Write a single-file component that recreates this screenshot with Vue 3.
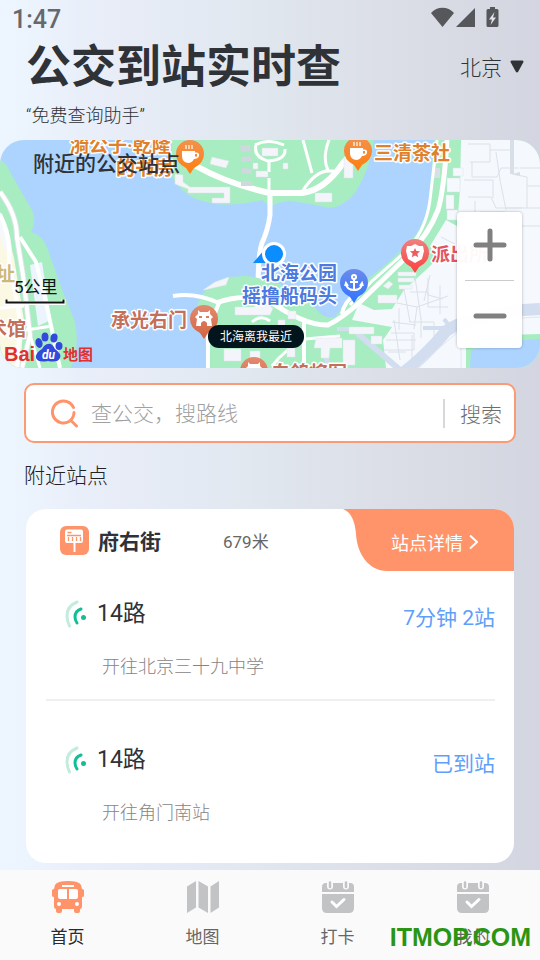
<template>
  <div class="page">
    <div class="status-bar">
      <span class="time">1:47</span>
      <svg class="status-icons" viewBox="0 0 68 22" aria-hidden="true">
        <path d="M0 6C6-1 17-1 23 6L11.500 20z" />
        <path d="M25 20L44 1V20z" />
        <path d="M59 0h5v2h2q1.500 0 1.500 1.500v15q0 1.500-1.500 1.500h-9q-1.500 0-1.500-1.500v-15q0-1.500 1.500-1.500h2z" />
        <path class="bolt" d="M63.500 5l-5.500 7.500h3l-1.500 5.500 5.500-7.500h-3z" />
      </svg>
    </div>

    <header class="header">
      <div>
        <h1 class="title">公交到站实时查</h1>
        <p class="subtitle">“免费查询助手”</p>
      </div>
      <div class="city">
        <select v-model="city" aria-label="城市">
          <option>北京</option>
        </select>
        <svg viewBox="0 0 14 13" aria-hidden="true">
          <path d="M1.500 0.500h11q1.500 0.500 0.700 2L8.300 11.500q-1.300 1.800-2.600 0L0.800 2.500Q0 1 1.500 0.500z" />
        </svg>
      </div>
    </header>

    <section class="map">
      <svg class="map-canvas" viewBox="0 140 540 228" preserveAspectRatio="xMidYMid slice">
        <defs>
          <linearGradient v-for="p in pinColors" :id="p.id" :key="p.id" x1="0" y1="0" x2="0" y2="1">
            <stop offset="0" :stop-color="p.from" />
            <stop offset="1" :stop-color="p.to" />
          </linearGradient>
        </defs>
        <rect y="140" width="540" height="228" fill="#acd4ff" />

        <!-- west bank -->
        <path fill="#a7edc1" d="M0 160Q7 163 10 172L33 212Q36 222 31 232Q42 234 48 250L60 284L75 322Q80 345 71 368H0z" />
        <path fill="#fbf8e4" d="M0 222Q8 232 14 258L24 320L20 368H0z" />
        <path fill="#ecf4fd" d="M30 265l12-3 9 58-13 6z" />
        <path fill="#f5f8fd" d="M0 212Q10 226 12 250L4 250 0 234z" />
        <g fill="none" stroke="#d9e5e4" stroke-width="6">
          <path d="M0 192Q17 214 17 238L23 275L30 335L22 368" />
        </g>
        <g fill="none" stroke="#fff" stroke-width="4">
          <path d="M0 192Q17 214 17 238L23 275L30 335L22 368" />
          <path d="M0 214Q10 235 9 260L20 320L17 368" />
          <path d="M20 237L36 262L46 302L54 340L60 368" />
          <path d="M26 330L52 326M0 308L24 306M30 335L40 368" stroke-width="3" />
        </g>

        <!-- north island -->
        <path fill="#a7edc1" d="M172 140H374Q370 170 355 193Q343 207 330 208Q312 204 290 201Q277 202 270 207L262 200Q240 206 215 204Q182 199 172 176z" />
        <g fill="none" stroke="#fff">
          <path stroke-width="6" d="M196 166Q228 184 270 193H302Q325 190 343 163L352 153" />
          <path stroke-width="3" d="M303 140L312 173M329 140Q322 158 328 170M302 192Q318 166 336 172M269 162v10M269 178v15" />
          <path stroke-width="3" d="M256 145Q253 157 268 161Q286 160 285 149M255 145Q268 138 284 145" />
        </g>
        <g fill="#f3f5fb" stroke="#dce3e8" stroke-width=".5">
          <path d="M175 174l8 1v7l7 5h40v16h-18v-5h12v-5h-36v-4l-13-5z" />
          <path d="M212 157l17 4-3 7-16-4z" />
          <path d="M253 163h5v6h-5zM256 171h12v6h-12zM262 148h16v8h-16zM344 158l9 4v16h-9zM315 193h17v9h-17zM283 163h5v6h-5z" />
        </g>
        <path fill="#cfd8dd" d="M240 146l10-1 1 6-10 1zM241 157l10-1 1 5-10 1zM242 168l10 1v5h-10zM241 181h11v5h-11z" />

        <!-- causeway between the islands -->
        <path fill="none" stroke="#fff" stroke-width="5" d="M270 193V215Q268 230 262 243Q258 254 258 290" />

        <!-- south island and east bank -->
        <path fill="#a7edc1" d="M208 368L206 331L195 314Q200 287 224 279Q247 272 270 282Q302 289 312 303Q321 320 335 317Q348 300 362 283Q390 263 411 240Q429 222 431 180L434 140H540V368z" />
        <path fill="#f5f8fd" d="M461 140H540V368H386L383 340L392 327L352 320L359 303L374 310L392 309L404 290L428 268L437 259L430 246L446 220L457 226L460 190z" />
        <path fill="#f5f8fd" stroke="#dce1e9" stroke-width=".5" d="M453 168h10v8h-10zM447 178h13v14h-13zM446 195h8v14h-8zM447 210h11v10h-11z" />

        <!-- buildings of the east bank -->
        <g fill="none" stroke="#dce1e9" stroke-width="1">
          <path d="M468 144h22v18h-20M490 150h22v22M472 162v15h25l4-9h18M464 180h29v18M468 197h23l5 11h26M480 212h25v14h35M506 208h34" />
          <path d="M496 152l4 28M500 180l6 30M512 174l15 3v31M527 186h13M540 168h-20M475 201v20" />
          <path d="M441 237l14 7M432 250l14 8M410 292h18v15h20M397 303l20 4-3 22M428 278v17l15 4M430 275l-6 26M417 307l31-11" />
          <path d="M391 333h23v17h-30M409 322h25v15M421 318v20M440 285v29M399 308v22M412 335v26" />
          <path d="M386 340h30M388 352h18M392 322l24 3M404 289l6 33M415 277l6 42M394 320l6 40" />
        </g>
        <path fill="#d9dfe6" d="M510 140h4v34h-4zM512 174l8-2v4z" />
        <path fill="#d9dfe6" d="M434 168h6v10h-6z" />
        <g fill="none" stroke="#d2ddef" stroke-width="12">
          <path d="M398 377Q426 356 446 331Q475 312 540 309" />
          <path d="M357 333L400 370" stroke-width="6" />
          <path d="M337 329h15M423 328h28l-7-9" stroke-width="4" />
          <path d="M325 350l4 22" stroke-width="5" />
        </g>
        <g fill="none" stroke="#e0e7f0" stroke-width="1">
          <path d="M417 368Q440 347 458 332Q482 319 540 317M467 368V340M461 368V340" />
        </g>
        <path fill="#a7edc1" d="M466 343Q490 335 540 334V368H466z" />
        <path fill="#acd4ff" d="M471 350Q500 341 540 339V368H470z" />

        <!-- southern and eastern roads -->
        <g fill="none" stroke="#fff" stroke-width="5">
          <path d="M173 296Q195 292 219 303L208 330V368" stroke-width="4" />
          <path d="M216 303Q235 295 265 298Q304 326 328 325Q341 319 360 302L397 266Q427 239 438 210Q444 190 447 140" />
          <path d="M350 305L372 281L404 253Q426 232 430 200L437 140" stroke-width="3" />
          <path d="M342 314Q344 302 356 293M304 319V368" stroke-width="4" />
          <path d="M272 366Q284 350 305 339L340 336M252 322Q261 314 270 321" stroke-width="3" />
        </g>
        <g fill="#f3f5fb" stroke="#dde7e8" stroke-width=".5">
          <path d="M203 290l12-8 14-5-3 8-22 5zM235 307h19l5-5 14 6-3 7h-35z" />
          <path d="M316 338h26v10h-12l-1 10h-8v-10h-7zM378 295h19v8h-19zM398 272h18v4h-18zM398 278h16v4h-16zM399 285h13v4h-13zM389 281l4 3-5 5-5-3zM349 327h25v7h-25zM343 340h12v25h-12zM371 336h11v8h-11zM287 348h8v9h-8zM278 320h7v8h-7zM288 311h8v8h-8z" />
          <path d="M224 349h17v12h-17zM250 351h10v10h-10z" />
        </g>

        <!-- current position -->
        <path fill="#0a8dff" d="M253 263l12-14 8 14z" />
        <circle cx="274" cy="254" r="10.500" fill="#0a8dff" stroke="#fff" stroke-width="3" />

        <g class="poi">
          <text v-for="l in labels" :key="l.text" :x="l.x" :y="l.y" :fill="l.color">{{ l.text }}</text>
        </g>

        <g v-for="p in pins" :key="p.x" :transform="`translate(${p.x} ${p.y})`">
          <path :fill="`url(#${p.fill})`" d="M-14 0a14 14 0 1 1 28 0Q14 9 4 14L0 20L-4 14Q-14 9-14 0z" />
          <g v-if="p.type === 'tea'" fill="#fff">
            <path d="M-8-3H5V-1.500Q10-2 9 2Q8 5 4 5Q2 9-2 9Q-8 8-8 2z" />
            <path d="M-4-9v4M-1-9v4M2-9v4" stroke="#fff" stroke-width="1.200" />
            <path d="M5 0h2v2.500H5z" :fill="`url(#${p.fill})`" />
          </g>
          <g v-else-if="p.type === 'police'">
            <path fill="#fff" d="M0-9l4 2 4 0 1 5-2 8-7 4-7-4-2-8 1-5h4z" />
            <path fill="#ee5962" d="M0-5l1.400 3 3.600.3-2.700 2.400 1 3.600L0 2.500l-3.300 1.800 1-3.600L-5-1.700l3.600-.3z" />
          </g>
          <g v-else-if="p.type === 'anchor'" fill="none" stroke="#fff" stroke-width="2">
            <circle cy="-6" r="2" />
            <path d="M0-4V7M-4-1H4M-8 1Q-7 7 0 7Q7 7 8 1M-9 3l1-3 2 3M9 3L8 0 6 3" />
          </g>
          <path v-else fill="#fff" fill-rule="evenodd" d="M-6-9l2 2h8l2-2v4l3 3-2 2 1 7H3V4Q0 0-3 4v3h-5l1-7-2-2 3-3zM-5-1h3v-2h-3zM2-1h3v-2H2z" />
        </g>

        <g class="callout">
          <rect x="208" y="325" width="96" height="23" rx="11" />
          <text x="220" y="341">北海离我最近</text>
        </g>

        <text class="scale-text" x="14" y="293">5公里</text>
        <path d="M6.500 299v4h57v-4" fill="none" stroke="#fff" stroke-width="4" />
        <path d="M6.500 299.500v3h57v-3" fill="none" stroke="#111" stroke-width="2" />

        <g class="baidu">
          <text x="4" y="361" class="bai">Bai</text>
          <g fill="#3349db">
            <ellipse cx="39" cy="343" rx="3.500" ry="5" transform="rotate(-15 39 343)" />
            <ellipse cx="45" cy="337" rx="3.500" ry="4.500" />
            <ellipse cx="54" cy="338" rx="3.500" ry="4.500" transform="rotate(12 54 338)" />
            <ellipse cx="59" cy="346" rx="3.500" ry="4" />
            <path d="M48 344Q52 343 55 349Q62 354 60 358Q58 363 48 361Q38 363 36 358Q35 353 42 349Q45 344 48 344z" />
          </g>
          <text x="42" y="359" class="du">du</text>
          <text x="63" y="360" class="ditu">地图</text>
        </g>
      </svg>

      <h2 class="map-title">附近的公交站点</h2>

      <div class="zoom">
        <button type="button" aria-label="放大">
          <svg viewBox="0 0 34 34"><path d="M3 17h28M17 3v28" /></svg>
        </button>
        <button type="button" aria-label="缩小">
          <svg viewBox="0 0 34 34"><path d="M3 17h28" /></svg>
        </button>
      </div>
    </section>

    <form class="search" @submit.prevent>
      <svg viewBox="0 0 28 30" aria-hidden="true">
        <path d="M22.500 9.500A11 11 0 1 0 18 23.500Q23 20 23 14.500M20.500 23l5 5" />
      </svg>
      <input v-model="keyword" type="text" placeholder="查公交，搜路线" aria-label="查公交，搜路线" />
      <button type="submit">搜索</button>
    </form>

    <h2 class="section-title">附近站点</h2>

    <section class="card">
      <div class="card-head">
        <svg class="stop-icon" viewBox="0 0 29 29" aria-hidden="true">
          <rect width="29" height="29" rx="6" fill="#ff946a" />
          <path d="M7 3.500h14q2 0 2 2V15q0 2-2 2h-5.500v9h-2v-9H7q-2 0-2-2V5.500q0-2 2-2z" fill="#fff" />
          <path d="M7.500 6.500h4M7 9.500h14M8.500 11v4M12.500 11v4M16.500 11v4M20.500 11v4" stroke="#ff946a" stroke-width="1.300" />
        </svg>
        <h3 class="stop-name">府右街</h3>
        <span class="distance">679米</span>
        <a class="detail" href="#">
          <svg class="detail-bg" viewBox="0 0 171 62" preserveAspectRatio="none" aria-hidden="true">
            <path d="M0 0C8 3 12 12 13 25C14 45 26 62 44 62H171V0z" />
          </svg>
          <span>站点详情</span>
          <svg class="chevron" viewBox="0 0 9 16" aria-hidden="true"><path d="M1 1.500l7 6.500-7 6.500" /></svg>
        </a>
      </div>

      <ul class="routes">
        <li v-for="r in routes" :key="r.to" class="route">
          <div class="route-line">
            <svg class="signal" viewBox="0 0 22 28" aria-hidden="true">
              <path d="M12 2Q2 6 2 16Q2 21 4.500 26" stroke="#c3ecdf" />
              <path d="M16 9Q10 11 10 17Q10 20 12 23" stroke="#10bf97" />
              <circle cx="18.500" cy="17.500" r="2.500" fill="#10bf97" />
            </svg>
            <span class="route-name">{{ r.name }}</span>
            <span class="eta">{{ r.eta }}</span>
          </div>
          <p class="dest">{{ r.to }}</p>
        </li>
      </ul>
    </section>

    <nav class="tabs">
      <a v-for="t in tabs" :key="t.label" href="#" :class="{ active: t.icon === 'bus' }">
        <svg viewBox="0 0 32 32" aria-hidden="true">
          <template v-if="t.icon === 'bus'">
            <path d="M3 4Q5 0 16 0Q27 0 29 4L30 8q2 0 2 1.500v5q0 1.500-2 1.500V25q0 3-2 3v2q0 2-2 2h-2q-2 0-2-2v-2H10v2q0 2-2 2H6q-2 0-2-2v-2q-2 0-2-3V16q-2 0-2-1.500v-5Q0 8 2 8z" />
            <path d="M10 4h12v2H10zM8 8h7v10H8q-2 0-2-2v-6q0-2 2-2zM17 8h7q2 0 2 2v6q0 2-2 2h-7z" fill="#fff" />
            <circle cx="7" cy="23" r="2" fill="#fff" />
            <circle cx="25" cy="23" r="2" fill="#fff" />
          </template>
          <path v-else-if="t.icon === 'map'" d="M0 5.500L9 0V26.500L0 32zM11.500 0L21 5.500V32L11.500 26.500zM23.500 5.500L32 0V26.500L23.500 32z" />
          <template v-else>
            <path d="M4 2h24q4 0 4 4v5H0V6q0-4 4-4zM0 13h32v14q0 5-5 5H5q-5 0-5-5z" />
            <path d="M8 1v4.500M24 1v4.500" stroke="#fafafa" stroke-width="6" stroke-linecap="round" />
            <path d="M8 1.500v4.500M24 1.500v4.500" stroke="#c1c3c5" stroke-width="2.500" stroke-linecap="round" />
            <path d="M10 21l4.500 4.500L22 18.500" fill="none" stroke="#fff" stroke-width="3" stroke-linecap="round" />
          </template>
        </svg>
        <span>{{ t.label }}</span>
      </a>
      <span class="watermark">ITMOP.COM</span>
    </nav>
  </div>
</template>

<script setup>
import { ref } from 'vue'

const city = ref('北京')
const keyword = ref('')

const pinColors = [
  { id: 'pin-orange', from: '#f2914e', to: '#ff7f0e' },
  { id: 'pin-red', from: '#f18080', to: '#fb4141' },
  { id: 'pin-blue', from: '#6c8cea', to: '#2e73ff' },
  { id: 'pin-brown', from: '#e38b70', to: '#d3633f' }
]

const pins = [
  { x: 190, y: 154, fill: 'pin-orange', type: 'tea' },
  { x: 358, y: 151, fill: 'pin-orange', type: 'tea' },
  { x: 415, y: 253, fill: 'pin-red', type: 'police' },
  { x: 354, y: 283, fill: 'pin-blue', type: 'anchor' },
  { x: 204, y: 319, fill: 'pin-brown', type: 'gate' },
  { x: 254, y: 371, fill: 'pin-brown', type: 'gate' }
]

const labels = [
  { text: '漪公子·乾隆', x: 70, y: 152, color: '#e0802b' },
  { text: '的书房', x: 116, y: 175, color: '#e0802b' },
  { text: '三清茶社', x: 374, y: 160, color: '#e0802b' },
  { text: '派出所', x: 431, y: 261, color: '#e25563' },
  { text: '北海公园', x: 261, y: 280, color: '#4d7ae0' },
  { text: '摇撸船码头', x: 242, y: 303, color: '#4d7ae0' },
  { text: '承光右门', x: 111, y: 327, color: '#c36f5c' },
  { text: '白鸽将军', x: 271, y: 380, color: '#c36f5c' },
  { text: '址', x: -4, y: 281, color: '#cdb878' },
  { text: '术馆', x: -12, y: 336, color: '#c36f5c' }
]

const routes = [
  { name: '14路', eta: '7分钟 2站', to: '开往北京三十九中学' },
  { name: '14路', eta: '已到站', to: '开往角门南站' }
]

const tabs = [
  { label: '首页', icon: 'bus' },
  { label: '地图', icon: 'map' },
  { label: '打卡', icon: 'calendar' },
  { label: '我的', icon: 'calendar' }
]
</script>

<style>
body {
  margin: 0;
}
</style>

<style scoped>
.page {
  min-height: 100vh;
  display: flex;
  flex-direction: column;
  background: linear-gradient(to right, #edf6ff 0%, #e8edf8 20%, #e1e8f0 45%, #dcdfe7 70%, #d3d6e0 100%);
  font-family: Roboto, "Noto Sans CJK SC", sans-serif;
  color: #2f3237;
}

h1, h2, h3, p, ul {
  margin: 0;
  padding: 0;
}

button, input, select {
  padding: 0;
  border: none;
  outline: none;
  background: none;
  font-family: inherit;
  color: inherit;
}

button {
  cursor: pointer;
}

a {
  text-decoration: none;
  color: inherit;
}

.status-bar {
  height: 40px;
  padding: 0 41px 0 12px;
  display: flex;
  align-items: center;
  justify-content: space-between;
}

.time {
  font-size: 25px;
  line-height: 36px;
  font-weight: 500;
  color: #66686c;
}

.status-icons {
  width: 68px;
  height: 22px;
  margin-bottom: 4px;
  fill: #55575b;
}

.status-icons .bolt {
  fill: #e0e3ea;
}

.header {
  height: 100px;
  padding: 0 16px 0 26px;
  display: flex;
  align-items: flex-start;
  justify-content: space-between;
}

.title {
  font-size: 45px;
  line-height: 56px;
  font-weight: 700;
}

.subtitle {
  margin-top: 8px;
  font-size: 18px;
  line-height: 24px;
  font-weight: 300;
}

.city {
  display: flex;
  align-items: center;
  gap: 8px;
  height: 56px;
}

.city select {
  appearance: none;
  width: 42px;
  font-size: 21px;
  font-weight: 300;
}

.city svg {
  width: 14px;
  height: 13px;
  margin-bottom: 4px;
  fill: #2f3237;
}

.map {
  position: relative;
  height: 228px;
  border-radius: 24px;
  overflow: hidden;
}

.map-canvas {
  display: block;
  width: 100%;
  height: 100%;
}

.poi text {
  font-size: 19px;
  font-weight: 700;
  stroke: #fff;
  stroke-width: 3px;
  stroke-linejoin: round;
  paint-order: stroke;
}

.callout rect {
  fill: #03151c;
}

.callout text {
  font-size: 12px;
  fill: #fff;
}

.scale-text {
  font-size: 17px;
  fill: #111;
}

.baidu text {
  font-weight: 700;
  fill: #e23030;
}

.baidu .bai {
  font-family: "Liberation Sans", sans-serif;
  font-size: 20px;
}

.baidu .du {
  font-size: 12px;
  font-style: italic;
  fill: #fff;
}

.baidu .ditu {
  font-size: 15px;
}

.map-title {
  position: absolute;
  top: 8px;
  left: 33px;
  font-size: 21px;
  line-height: 32px;
  font-weight: 500;
}

.zoom {
  position: absolute;
  top: 72px;
  right: 18px;
  width: 65px;
  box-sizing: border-box;
  padding: 0 8px;
  border-radius: 4px;
  background: rgba(255, 255, 255, 0.96);
  box-shadow: 0 0 3px rgba(0, 0, 0, 0.3);
}

.zoom button {
  display: flex;
  align-items: center;
  justify-content: center;
  width: 100%;
  height: 68px;
  box-sizing: border-box;
  padding-bottom: 2px;
}

.zoom button + button {
  padding: 3px 0 0;
  border-top: 1px solid #ccc;
}

.zoom svg {
  width: 34px;
  height: 34px;
  stroke: #808080;
  stroke-width: 5;
  stroke-linecap: round;
}

.search {
  display: flex;
  align-items: center;
  height: 60px;
  box-sizing: border-box;
  margin: 15px 24px 0;
  padding: 0 12px 0 25px;
  border: 2px solid #fb9a74;
  border-radius: 10px;
  background: #fff;
}

.search svg {
  flex: none;
  width: 28px;
  height: 30px;
  fill: none;
  stroke: #ff946a;
  stroke-width: 3;
  stroke-linecap: round;
}

.search input {
  flex: 1;
  min-width: 0;
  margin-left: 12px;
  padding-top: 2px;
  font-size: 21px;
  font-weight: 300;
}

.search input::placeholder {
  color: #a0a0a0;
  opacity: 1;
}

.search button {
  height: 29px;
  padding: 2px 0 0 15px;
  border-left: 2px solid #d8d8d8;
  font-size: 21px;
  line-height: 29px;
  font-weight: 300;
  color: #6e6e6e;
}

.section-title {
  margin: 17px 24px;
  font-size: 21px;
  line-height: 32px;
  font-weight: 300;
  color: #222;
}

.card {
  margin: 0 26px 7px;
  padding-bottom: 18px;
  border-radius: 20px;
  background: #fff;
  overflow: hidden;
}

.card-head {
  display: flex;
  align-items: center;
  height: 62px;
  padding-left: 34px;
}

.stop-icon {
  width: 29px;
  height: 29px;
}

.stop-name {
  margin-left: 9px;
  padding-top: 4px;
  font-size: 21px;
  line-height: 32px;
  font-weight: 700;
}

.distance {
  margin-left: 62px;
  padding-top: 4px;
  font-size: 17px;
  line-height: 24px;
  color: #666;
}

.detail {
  position: relative;
  display: flex;
  align-items: center;
  gap: 6px;
  width: 171px;
  height: 62px;
  box-sizing: border-box;
  margin-left: auto;
  padding: 3px 0 0 48px;
  font-size: 18px;
  color: #fff;
}

.detail-bg {
  position: absolute;
  inset: 0;
  width: 100%;
  height: 100%;
  fill: #ff946a;
}

.detail span,
.chevron {
  position: relative;
}

.chevron {
  width: 9px;
  height: 16px;
  fill: none;
  stroke: #fff;
  stroke-width: 2;
}

.routes {
  display: flex;
  flex-direction: column;
  gap: 16px;
  margin: 0 19px 0 20px;
  list-style: none;
}

.route {
  padding: 25px 0 22px;
}

.route:not(:last-child) {
  border-bottom: 2px solid #efefef;
}

.route-line {
  display: flex;
  align-items: center;
  height: 36px;
  padding-left: 19px;
}

.signal {
  width: 22px;
  height: 28px;
  fill: none;
  stroke-width: 3;
  stroke-linecap: round;
}

.route-name {
  margin-left: 10px;
  font-size: 23px;
  line-height: 36px;
}

.eta {
  align-self: flex-end;
  margin-left: auto;
  font-size: 21px;
  line-height: 28px;
  color: #5f9ffb;
}

.dest {
  margin: 25px 0 0 56px;
  font-size: 18px;
  line-height: 20px;
  font-weight: 300;
  color: #858585;
}

.tabs {
  position: relative;
  display: flex;
  height: 90px;
  margin-top: auto;
  background: #fafafa;
}

.tabs a {
  flex: 1;
  display: flex;
  flex-direction: column;
  align-items: center;
  gap: 12px;
  padding-top: 11px;
  font-size: 17px;
  line-height: 24px;
  color: #666;
}

.tabs a.active {
  color: #2b2b2b;
}

.tabs svg {
  width: 32px;
  height: 32px;
  fill: #c1c3c5;
}

.tabs .active svg {
  fill: #ff946a;
}

.watermark {
  position: absolute;
  right: 9px;
  bottom: 7px;
  font-family: "Liberation Sans", sans-serif;
  font-size: 25px;
  line-height: 32px;
  font-weight: 700;
  color: #2a9512;
}
</style>
